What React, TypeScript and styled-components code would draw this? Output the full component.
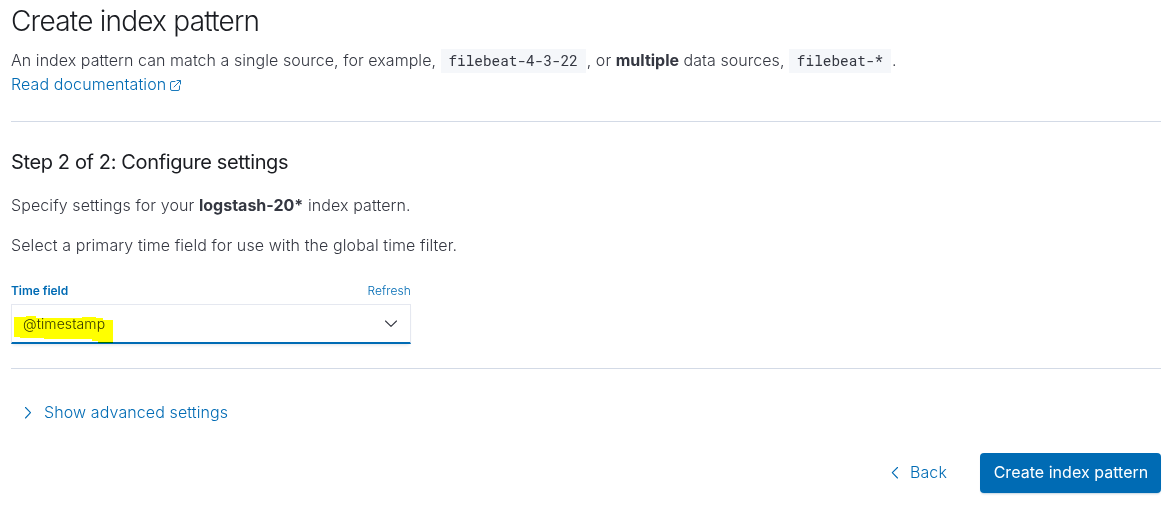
import React from 'react';
import styled, { createGlobalStyle } from 'styled-components';

const Global = createGlobalStyle`
  * { box-sizing: border-box; }
  body { margin: 0; background: #fff; color: #343741; font: 300 16px/24px Inter, sans-serif; }
`;

const Page = styled.main`
  width: 1170px;
  height: 507px;
  padding: 1px 9px 0 11px;
  overflow: hidden;
`;

const Title = styled.h1`
  margin: 0 0 7px;
  font-size: 28px;
  line-height: 40px;
  font-weight: 300;
  letter-spacing: -0.77px;
  color: #1a1c21;
`;

const Text = styled.p<{ $gap?: number; $tracking?: number }>`
  margin: 0 0 ${({ $gap = 16 }) => $gap}px;
  letter-spacing: ${({ $tracking = 0.095 }) => $tracking}px;
  white-space: nowrap;
`;

const Strong = styled.strong`
  font-weight: 700;
  letter-spacing: 0;
`;

const Code = styled.code`
  display: inline-block;
  height: 24px;
  margin: 1px 1px -1px 0;
  padding: 0 7.8px;
  vertical-align: top;
  background: #f5f7fa;
  font: 400 14.4px/23px "Roboto Mono", "DejaVu Sans Mono", monospace;
  letter-spacing: 0;
`;

const Link = styled.a`
  color: #006bb4;
  letter-spacing: 0.1px;
  text-decoration: none;
`;

const Rule = styled.hr`
  height: 1px;
  margin: 0;
  border: 0;
  background: #d3dae6;
`;

const StepTitle = styled.h2`
  margin: 24px 0 15px;
  font-size: 20px;
  line-height: 32px;
  font-weight: 400;
  letter-spacing: -0.37px;
  color: #1a1c21;
`;

const Field = styled.div`
  width: 400px;
  margin-bottom: 24px;
`;

const Labels = styled.div`
  display: flex;
  justify-content: space-between;
  font-size: 12px;
  line-height: 18px;
  letter-spacing: 0.1px;
  color: #006bb4;
`;

const Label = styled.label`
  font-weight: 600;
  letter-spacing: -0.05px;
`;

const Select = styled.div`
  position: relative;
  display: flex;
  justify-content: space-between;
  align-items: center;
  height: 40px;
  margin-top: 4px;
  padding: 0 13px 0 11px;
  border: 1px solid #e5e8f0;
  border-bottom: 2px solid #006bb4;
  box-shadow: 0 3px 3px -2px #98a2b34d;
  font-size: 14px;
  letter-spacing: 0.1px;
`;

const Marker = styled.svg`
  position: absolute;
  left: 2px;
  top: 11px;
  mix-blend-mode: multiply;
`;

const Advanced = styled.button`
  display: flex;
  align-items: center;
  gap: 8px;
  margin: 31px 0 0 9px;
  padding: 0;
  border: 0;
  background: none;
  font: inherit;
  letter-spacing: 0.11px;
  color: #006bb4;
`;

const Footer = styled.footer`
  display: flex;
  justify-content: flex-end;
  align-items: center;
  gap: 33px;
  margin-top: 29px;
`;

const Back = styled(Advanced)`
  margin: 0 0 2px;
`;

const Primary = styled.button`
  width: 181px;
  height: 40px;
  padding: 0 0 2px 1px;
  border: 0;
  border-radius: 4px;
  background: #006bb4;
  box-shadow: 0 2px 2px -1px #366d954d;
  color: #fff;
  font: 400 16px Inter, sans-serif;
  letter-spacing: 0.03px;
`;

const Icon = styled.svg`
  flex: none;
  fill: none;
  stroke: currentColor;
  stroke-width: 1.1;
  stroke-linecap: round;
  stroke-linejoin: round;
`;

const LinkIcon = styled(Icon)`
  margin-left: 4px;
  vertical-align: -1px;
  stroke-width: 0.9;
`;

export default function App() {
  return (
    <Page>
      <Global />
      <Title>Create index pattern</Title>
      <Text $gap={25} $tracking={0.053}>
        An index pattern can match a single source, for example, <Code>filebeat-4-3-22</Code>
        , or <Strong>multiple</Strong> data sources, <Code>filebeat-*</Code>.
        <br />
        <Link>
          Read documentation
          <LinkIcon width="11" height="11" viewBox="0 0 11 11">
            <path d="M5 1.500H2Q.5 1.500 .5 3V9Q.5 10.500 2 10.500H8Q9.500 10.500 9.500 9V6M7 .5H10.500V4M10.200 .8L4 7" />
          </LinkIcon>
        </Link>
      </Text>
      <Rule />
      <StepTitle>Step 2 of 2: Configure settings</StepTitle>
      <Text>Specify settings for your <Strong>logstash-20*</Strong> index pattern.</Text>
      <Text $gap={25}>Select a primary time field for use with the global time filter.</Text>
      <Field>
        <Labels><Label>Time field</Label><span>Refresh</span></Labels>
        <Select>
          <span>@timestamp</span>
          <Icon width="12" height="8" viewBox="0 0 12 8"><path d="M.5 1L6 6.300L11.500 1" /></Icon>
          <Marker width="100" height="28" viewBox="0 0 100 28">
            <path fill="#ff0" d="M0 1H12V0H22V2H68V1H82V2H89V4H99V27H84V25H78V23H30V22H6V21H0Z" />
          </Marker>
        </Select>
      </Field>
      <Rule />
      <Advanced>
        <Icon width="16" height="16" viewBox="0 0 16 16"><path d="M5.500 3.500L10.500 8.700L5.500 14" /></Icon>
        Show advanced settings
      </Advanced>
      <Footer>
        <Back>
          <Icon width="16" height="16" viewBox="0 0 16 16"><path d="M11.500 3.500L6.300 8.700L11.500 14" /></Icon>
          Back
        </Back>
        <Primary>Create index pattern</Primary>
      </Footer>
    </Page>
  );
}
